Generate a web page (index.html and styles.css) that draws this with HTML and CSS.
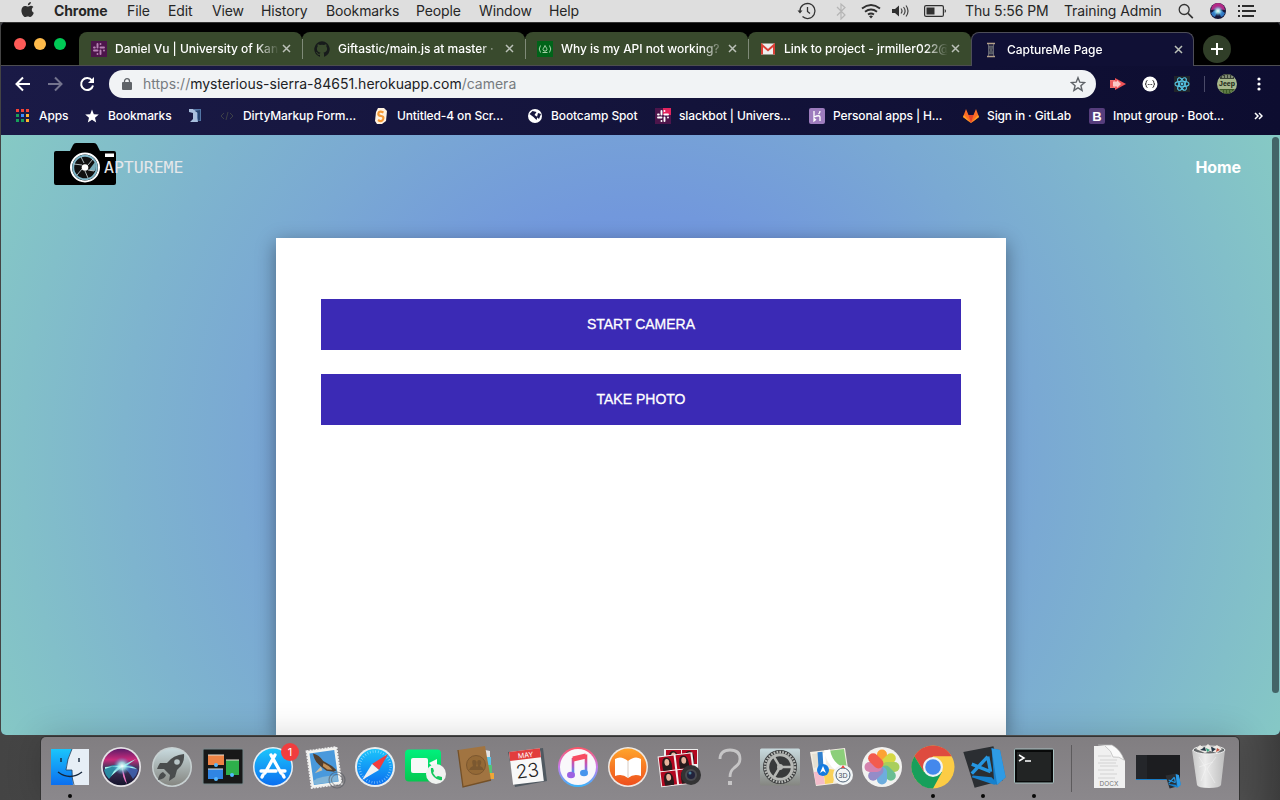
FILE: index.html
```html
<!DOCTYPE html>
<html lang="en">
<head>
<meta charset="utf-8">
<title>CaptureMe Page</title>
<link rel="stylesheet" href="styles.css">
</head>
<body>
<svg class="defs" width="0" height="0">
  <defs>
    <linearGradient id="siriTop" x1="0" y1="0" x2="0" y2="1"><stop offset="0" stop-color="#5a1c68"/><stop offset=".3" stop-color="#c92b7b"/><stop offset=".5" stop-color="#4a355e"/><stop offset="1" stop-color="#14142c"/></linearGradient>
    <radialGradient id="glow"><stop offset="0" stop-color="#fff"/><stop offset=".4" stop-color="#a5f3f3" stop-opacity=".8"/><stop offset="1" stop-color="#3a7fd0" stop-opacity="0"/></radialGradient>
    <linearGradient id="blue" x1="0" y1="0" x2="0" y2="1"><stop offset="0" stop-color="#1bc5fb"/><stop offset="1" stop-color="#0b6ff0"/></linearGradient>
    <linearGradient id="silver" x1="0" y1="0" x2="0" y2="1"><stop offset="0" stop-color="#c8dade"/><stop offset="1" stop-color="#858681"/></linearGradient>
    <linearGradient id="green" x1="0" y1="0" x2="0" y2="1"><stop offset="0" stop-color="#00f17d"/><stop offset="1" stop-color="#05c750"/></linearGradient>
    <linearGradient id="orange" x1="0" y1="0" x2="0" y2="1"><stop offset="0" stop-color="#ffa42b"/><stop offset="1" stop-color="#ee4f1d"/></linearGradient>
    <linearGradient id="tunes" x1="0" y1="0" x2="0" y2="1"><stop offset="0" stop-color="#fd5565"/><stop offset=".5" stop-color="#c97bee"/><stop offset="1" stop-color="#36b6fb"/></linearGradient>
    <linearGradient id="note" x1="0" y1="0" x2="0" y2="1"><stop offset="0" stop-color="#f8495f"/><stop offset=".55" stop-color="#b05bcc"/><stop offset="1" stop-color="#3aa2f5"/></linearGradient>
    <linearGradient id="bin" x1="0" y1="0" x2="1" y2="0"><stop offset="0" stop-color="#c6c6c6"/><stop offset=".4" stop-color="#ececec"/><stop offset="1" stop-color="#bdbdbd"/></linearGradient>
    <g id="slackMark" stroke-width="1.900" stroke-linecap="round" fill="none"><path d="M6.500 3v3.500M3 6.500h.8M9.500 3v0M9.500 6.500H13M3 9.500h3.500M6.500 13v0M9.500 9.500V13M13 9.500h0"/></g>
    <g id="codeMark"><path d="M-22-16 10-22l10 36-30 8z" fill="#2b2e32"/><path d="M8-20l9 2 6 29-9 8-3-1z" fill="#197cc4"/><path d="M8-20l9 2 6 29-9 8z" fill="#2f9be5"/><path d="M8 11-12 9l-1 2 24 8 3-2z" fill="#1681ce"/><path d="M4-11-13 7M-13-3 7 5M4-11 7 5" stroke="#2596e1" stroke-width="3.600" fill="none"/></g>
    <g id="portrait"><path d="M0 0h15v14H0z" fill="#b30820"/><path d="M3 14C2 6 3 1 7 1s6 5 5 13z" fill="#271b1c"/><ellipse cx="7.500" cy="6" rx="2.400" ry="3.400" fill="#e8b39c"/></g>
  </defs>
</svg>

<header class="menubar">
  <nav class="menus">
    <svg class="apple" width="16" height="20" viewBox="0 0 16 20"><path d="M10.900 2c.1 1.700-1.300 3.200-3 3.200C7.700 3.600 9.200 2.100 10.900 2zM13.400 7c-1 .6-1.600 1.600-1.600 2.800 0 1.300.8 2.500 2 3-.6 1.900-2 4.200-3.500 4.200-.9 0-1.300-.6-2.500-.6s-1.700.6-2.500.6C3.500 17 1.400 13.400 1.400 10.400c0-2.700 1.700-4.500 3.700-4.500 1.200 0 2 .7 2.700.7.700 0 1.600-.8 3.100-.8 1 0 1.900.4 2.500 1.200z" fill="#303030"/></svg>
    <b>Chrome</b><span>File</span><span>Edit</span><span>View</span><span>History</span><span>Bookmarks</span><span>People</span><span>Window</span><span>Help</span>
  </nav>
  <div class="status">
    <svg width="20" height="18" viewBox="0 0 20 18" fill="none" stroke="#333" stroke-width="1.300"><path d="M3 9a7.500 7.500 0 1 1 2.500 5.600M10.500 5v4.500l2.500 2"/><path d="M.5 8.500h5L3 11.500z" fill="#333" stroke="none"/></svg>
    <svg width="12" height="18" viewBox="0 0 12 18" fill="none" stroke="#b5b5b5" stroke-width="1.200"><path d="M2 5l8 8-4 4V2l4 3.500-8 8"/></svg>
    <svg width="20" height="18" viewBox="0 0 20 18" fill="none" stroke="#303030" stroke-width="1.900"><path d="M1 6.500q9-7 18 0M4 9.700q6-4.500 12 0M7 12.600q3-2.200 6 0"/><path d="M10 16.500l-2-2.200q2-1.400 4 0z" fill="#303030" stroke="none"/></svg>
    <svg width="18" height="18" viewBox="0 0 18 18" fill="none" stroke="#444" stroke-width="1.200"><path d="M1 7h3l4-3.500v11L4 11H1z" fill="#303030" stroke="none"/><path d="M10 6.500q2 2.500 0 5M12.500 5q3.200 4 0 8M15 3.500q4 5.500 0 11"/></svg>
    <svg width="23" height="18" viewBox="0 0 23 18"><rect x=".6" y="3.600" width="18.800" height="10.800" rx="1.500" fill="none" stroke="#303030" stroke-width="1.200"/><path d="M2.500 5.500h8v7h-8z" fill="#303030"/><path d="M20.700 7q2.600 2 0 4z" fill="#303030"/></svg>
    <span>Thu 5:56 PM</span><span>Training Admin</span>
    <svg width="16" height="18" viewBox="0 0 16 18" fill="none" stroke="#333" stroke-width="1.300"><circle cx="6.200" cy="7.500" r="5"/><path d="M10 11.300l4.800 4.800" stroke-width="1.700"/></svg>
    <svg width="16" height="18" viewBox="-8 -9 16 18"><circle r="8" fill="#17173a"/><path d="M-7-1A7 7 0 0 1 7-1Q3-2 0-1-3-2-7-1z" fill="#b32a86"/><path d="M-7 2Q-4-1 0-1L-3 6Q-6 5-7 2zM7 2Q4-1 0-1L3 6Q6 5 7 2z" fill="#3079c4"/><circle r="5.500" fill="url(#glow)"/></svg>
    <svg width="19" height="18" viewBox="0 0 19 18" stroke="#2c2c2c" stroke-width="2"><path d="M0 4h2M0 9h2M0 14h2M4 4h12M4 9h14M4 14h12"/></svg>
  </div>
</header>

<main class="window">
  <div class="tabstrip">
    <div class="lights"><i class="close"></i><i class="mini"></i><i class="maxi"></i></div>
    <div class="tab">
      <svg width="16" height="16"><path d="M0 0h16v16H0z" fill="#4d154b"/><use href="#slackMark" stroke="#b883b5"/></svg>
      <span>Daniel Vu | University of Kan</span><svg class="x" width="9" height="9"><path d="M1 1l7 7M8 1L1 8"/></svg>
    </div>
    <div class="tab">
      <svg width="16" height="16" viewBox="0 0 16 16"><path d="M8 .2a8 8 0 0 0-2.500 15.500c.4.100.5-.2.500-.4v-1.500c-2 .4-2.600-.5-2.800-1-.1-.3-.5-1-.9-1.200-.3-.2-.7-.5 0-.5.600 0 1.100.6 1.200.8.700 1.200 1.900.9 2.500.7 0-.5.200-.9.500-1.100-1.800-.2-3.600-.9-3.600-4 0-.9.300-1.600.8-2.100-.1-.2-.4-1 .1-2.100 0 0 .7-.2 2.200.8a7.500 7.500 0 0 1 4 0c1.500-1 2.200-.8 2.200-.8.500 1.100.2 1.900.1 2.100.5.600.8 1.300.8 2.100 0 3.100-1.900 3.800-3.700 4 .3.300.6.700.6 1.500v2.300c0 .2.100.5.500.4A8 8 0 0 0 8 .2z" fill="#171b1b"/></svg>
      <span>Giftastic/main.js at master ·</span><svg class="x" width="9" height="9"><path d="M1 1l7 7M8 1L1 8"/></svg>
    </div>
    <div class="tab">
      <svg width="16" height="16"><path d="M0 0h16v16H0z" fill="#006419"/><path d="M3.500 4.500q-2.500 3.500 0 7M12.500 4.500q2.500 3.500 0 7M5.500 11.500h5M8 4.500q-.5 1.500-1.600 2.800t.6 2.700h2q1.600-1 .6-2.700T8 4.500z" fill="none" stroke="#b9dfb9" stroke-width=".9"/></svg>
      <span>Why is my API not working?</span><svg class="x" width="9" height="9"><path d="M1 1l7 7M8 1L1 8"/></svg>
    </div>
    <div class="tab">
      <svg width="16" height="16"><path d="M1 2.500h14v11H1z" fill="#eee"/><path d="M2 13.500V4l6 5.200L14 4v9.500" fill="none" stroke="#d93f35" stroke-width="2"/></svg>
      <span>Link to project - jrmiller022@</span><svg class="x" width="9" height="9"><path d="M1 1l7 7M8 1L1 8"/></svg>
    </div>
    <div class="tab active">
      <svg width="16" height="16"><path d="M4 1.500h8M4 14.500h8" stroke="#b6a28a" stroke-width="1.600"/><path d="M5.500 2v12M10.500 2v12" stroke="#777a83" stroke-width=".8"/><path d="M6 4h4l-1 4 1 4H6l1-4z" fill="#4e535f" stroke="#777" stroke-width=".6"/></svg>
      <span>CaptureMe Page</span><svg class="x" width="9" height="9"><path d="M1 1l7 7M8 1L1 8"/></svg>
    </div>
    <div class="newtab"><svg width="12" height="12"><path d="M6 0v12M0 6h12" stroke="#fff" stroke-width="2"/></svg></div>
  </div>

  <div class="toolbar">
    <svg width="16" height="16" fill="none" stroke="#fff" stroke-width="2"><path d="M15 8H2M8 1.500L1.500 8 8 14.500"/></svg>
    <svg width="16" height="16" fill="none" stroke="#74748e" stroke-width="2"><path d="M1 8h13M8 1.500L14.500 8 8 14.500"/></svg>
    <svg width="16" height="16" fill="none" stroke="#fff" stroke-width="2"><path d="M13 4.500A6 6 0 1 0 14 9.500"/><path d="M15 1v6H9z" fill="#fff" stroke="none"/></svg>
    <div class="omnibox">
      <svg width="10" height="12"><path d="M1 4h8q1 0 1 1v6q0 1-1 1H1q-1 0-1-1V5q0-1 1-1z" fill="#5f6368"/><path d="M2.500 5V3.200a2.500 2.500 0 0 1 5 0V5" fill="none" stroke="#5f6368" stroke-width="1.300"/></svg>
      <span class="url"><span>https://</span>mysterious-sierra-84651.herokuapp.com<span>/camera</span></span>
      <svg width="16" height="16" fill="none" stroke="#5f6368" stroke-width="1.400"><path d="M8 1.700l1.800 4.500 4.800.4-3.700 3.100 1.200 4.700L8 11.800l-4.100 2.600 1.200-4.700L1.400 6.600l4.800-.4z"/></svg>
    </div>
    <svg width="16" height="16"><path d="M0 4h7v8H0z" fill="#f6827f"/><path d="M5 2l11 6-11 6z" fill="#ef5357"/><path d="M0 4.500h4v7H0z" fill="#ee5d5f"/><path d="M3 5.500h4v5H3zM7 4l4 4-4 4z" fill="#fbc8c6"/></svg>
    <svg width="16" height="16"><circle cx="8" cy="8" r="7.500" fill="#fff"/><path d="M5.500 4.500q-1.500 0-1.300 1.800T3 8q1.400.2 1.200 1.800t1.300 1.700M10.500 4.500q1.500 0 1.300 1.800T13 8q-1.400.2-1.200 1.800t-1.300 1.700M5.800 8.500h1M7.500 8.500h1M9.200 8.500h1" fill="none" stroke="#333"/></svg>
    <svg width="16" height="16" viewBox="-8 -8 16 16"><path d="M-8-8H8V8H-8z" fill="#20242a"/><g fill="none" stroke="#55c4e3" stroke-width="1.100"><ellipse rx="7" ry="2.700"/><ellipse rx="7" ry="2.700" transform="rotate(60)"/><ellipse rx="7" ry="2.700" transform="rotate(120)"/></g><circle r="1.400" fill="#55c4e3"/></svg>
    <i class="rule"></i>
    <svg class="avatar" width="20" height="20"><circle cx="10" cy="10" r="10" fill="#a6b78b"/><path d="M3 3q7-6 14 0v2H3z" fill="#3a4336"/><path d="M2 15h16q-8 10-16 0z" fill="#3c5828"/><path d="M6 2v2M9 1v3M12 1v3M15 2v2" stroke="#c9d5b5"/><path d="M5 16v2M8 16v3M11 16v3M14 16v2" stroke="#7c9a60"/><text x="10" y="11.500" text-anchor="middle">Jeep</text></svg>
    <svg width="4" height="16" fill="#fff"><circle cx="2" cy="3" r="1.600"/><circle cx="2" cy="8" r="1.600"/><circle cx="2" cy="13" r="1.600"/></svg>
  </div>

  <div class="bookmarks">
    <a><svg width="16" height="16" stroke-width="3"><path d="M1 2.500h3M6 2.500h3M11 2.500h3" stroke="#f44336"/><path d="M1 7.500h3M1 12.500h3M6 12.500h3" stroke="#17a05a"/><path d="M6 7.500h3" stroke="#388cff"/><path d="M11 7.500h3M11 12.500h3" stroke="#ffb52b"/></svg>Apps</a>
    <a><svg width="16" height="16"><path d="M8 1.500l1.800 4.700 5 .3-3.800 3.200 1.200 4.800L8 11.800l-4.200 2.700L5 9.700 1.200 6.500l5-.3z" fill="#fff"/></svg>Bookmarks</a>
    <a><svg width="16" height="16"><path d="M7 1h7v12H8z" fill="#5375a5"/><path d="M2 1h4l4 3v6l1 4H3l3-3V5L2 4z" fill="#a9bfdd"/><path d="M8 3l3 2v8l2-1V2z" fill="#27436f"/></svg></a>
    <a><svg width="16" height="16" fill="none" stroke="#3d4047"><path d="M5 5L2 8l3 3M11 5l3 3-3 3M9 4L7 12"/></svg>DirtyMarkup Form...</a>
    <a><svg width="16" height="16"><path d="M5 0h6l3 3-1 10-4 3H4l-2-3 1-9z" fill="#fff2df"/><path d="M10.500 4.500q-4-2-5 .5t2.500 3 2 3.500-5 .5" fill="none" stroke="#f69a35" stroke-width="2.200"/></svg>Untitled-4 on Scr...</a>
    <a><svg width="16" height="16"><circle cx="8" cy="8" r="7" fill="#fff"/><path d="M2.500 6l3-3 4 1-2 3 3 2-1 3-3-3zM11 5l3 1-2 5-2-2z" fill="#17173e"/></svg>Bootcamp Spot</a>
    <a><svg width="16" height="16"><path d="M0 0h16v16H0z" fill="#4d154b"/><path d="M8 0h8v7H8z" fill="#e4245e"/><use href="#slackMark" stroke="#fff"/></svg>slackbot | Univers...</a>
    <a><svg width="16" height="16"><rect width="16" height="16" rx="2" fill="#9d7cbd"/><path d="M5 3v6q6-2.500 6 0v4M11 3q0 2-1.500 3M5 10.500v2.500l1.500-1.200z" fill="none" stroke="#fff" stroke-width="1.300"/></svg>Personal apps | H...</a>
    <a><svg width="16" height="16"><path d="M3 1l2.500 6h5L13 1l3 8-8 6-8-6z" fill="#fc6d26"/><path d="M5.500 7h5L8 15z" fill="#e24329"/><path d="M0 9l1-2 7 8zM16 9l-1-2-7 8z" fill="#fca326"/></svg>Sign in · GitLab</a>
    <a><svg class="boot" width="16" height="16"><rect width="16" height="16" rx="2" fill="#563d7c"/><text x="8" y="12.500" text-anchor="middle">B</text></svg>Input group · Boot...</a>
    <svg class="more" width="9" height="8" fill="none" stroke="#fff" stroke-width="1.500"><path d="M1 1l3 3-3 3M5 1l3 3-3 3"/></svg>
  </div>

  <section class="page">
    <nav class="site-nav">
      <div class="brand">
        <svg width="64" height="44"><path d="M3 9h14l3-6q1-2 3-2h18q2 0 3 2l3 6h14q2 0 2 2v30q0 2-2 2H3q-2 0-2-2V11q0-2 2-2z"/><path d="M52 11.500h9v3.500h-9z" fill="#fff"/><circle cx="32" cy="25.500" r="14" fill="#111" stroke="#fff" stroke-width="2"/><circle cx="32" cy="25.500" r="11.800" fill="none" stroke="#80b7c9" stroke-width="2"/><path d="M42 20q2 4 0 9l-6-1z" fill="#77acba"/><g stroke="#d6e2e5" stroke-width=".8" fill="none"><path d="M29 23l-8-1M31 21l-3-6M35 23l5-6M35 28l6 1M32 29l3 7M29 27l-5 6"/></g><circle cx="32" cy="25.500" r="3.300" fill="#fff"/></svg>
        <span>APTUREME</span>
      </div>
      <a>Home</a>
    </nav>
    <div class="card">
      <button>START CAMERA</button>
      <button>TAKE PHOTO</button>
    </div>
    <i class="scrollbar"></i>
  </section>
</main>

<footer class="dock">
  <div class="app running"><svg viewBox="-25 -25 50 50"><path d="M-19-18h38v36h-38z" fill="#e6eef6"/><path d="M-19-18H2Q-3-8-4 3H2l1 15h-22z" fill="url(#blue)"/><path d="M2-18Q-3-8-4 3H2q-.5 8 2 15" fill="none" stroke="#21405d" stroke-width=".8"/><path d="M-9-9v4M9-9v4M-12 5Q0 14 12 5" fill="none" stroke="#14253a" stroke-width="1.400"/></svg></div>
  <div class="app"><svg viewBox="-25 -25 50 50"><circle r="20" fill="#e5e3e6"/><circle r="18.300" fill="url(#siriTop)"/><path d="M-17 3Q-10-4 1-1-6 4-12 12-16 8-17 3z" fill="#27a3b8" opacity=".8"/><path d="M17 3Q9-5 1-1 7 3 12 12 16 8 17 3z" fill="#3f66b8" opacity=".8"/><path d="M1-1q2 7 5 18-5-6-5-18" fill="#ef78c4"/><path d="M-16 2Q-5-2 1-1q7-4 14-7-7 5-10 7 7 0 11 3-9-2-15-2-5 4-11 9 3-6 7-9-6-1-13 0z" fill="#a5f5ee"/><circle cx="1" cy="-1" r="9" fill="url(#glow)"/></svg></div>
  <div class="app"><svg viewBox="-25 -25 50 50"><circle r="20" fill="#c8d1d2"/><circle r="18.500" fill="url(#silver)"/><path d="M12-13Q1-12-5-4l-7 0q-2 3-3 6l7 0 6 6-1 6 6-4 2-7Q13-3 12-13zM-9 5q-4 1-5 8 7-1 8-5z" fill="#4a4d4e"/><circle cx="5" cy="-5" r="2.800" fill="#b8c5c7"/></svg></div>
  <div class="app"><svg viewBox="-25 -25 50 50"><rect x="-20" y="-18" width="40" height="35" rx="1" fill="#171818" stroke="#77888b"/><path d="M-15-12H1V-2h-16z" fill="#ed8345"/><path d="M3-7h13V8H3z" fill="#2daf4b"/><path d="M-15 2H0v10h-15z" fill="#3085e3"/><path d="M-15-12H1M3-7h13M-15 2H0" stroke="#e4ded4"/><g fill="#54b7ff"><circle cx="-7" cy="-2" r="2"/><circle cx="9" cy="8" r="2"/><circle cx="-7" cy="12" r="2"/></g></svg></div>
  <div class="app badged"><svg viewBox="-25 -25 50 50"><circle r="20" fill="#e8eef3"/><circle r="18.500" fill="url(#blue)"/><path d="M2-12L-8 6M-2-12L8 6M-12 4H3M7 4h5M-10 8l-1 2M10 8l1 2" stroke="#fff" stroke-width="3.300" stroke-linecap="round"/></svg><b>1</b></div>
  <div class="app"><svg viewBox="-25 -25 50 50"><g transform="rotate(-8)"><path d="M-15-18h30v37h-30z" fill="#f5f5f0" stroke="#eee" stroke-width="2" stroke-dasharray="2 1"/><path d="M-12.500-15.500h25v32h-25z" fill="#4999dc"/><path d="M-9-15q6 2 9 9l8 6 4 5-3 1-7-2-5-5q-6-6-6-14z" fill="#54402f"/><path d="M0-4l5 4 3 4-5-1-4-4z" fill="#c69257"/><path d="M-3-1l-7 6 8-2z" fill="#cfc0a5"/><path d="M-12 12q8-4 24-2v6h-24z" fill="#7fb4d8"/></g><circle cx="13" cy="13" r="8" fill="none" stroke="#555a61" stroke-width="1.200" opacity=".6"/><circle cx="13" cy="13" r="5.500" fill="none" stroke="#555a61" opacity=".6"/></svg></div>
  <div class="app"><svg viewBox="-25 -25 50 50"><circle r="20" fill="#e9edef"/><circle r="18" fill="url(#blue)"/><circle r="15.500" fill="none" stroke="#bae9ff" stroke-width="2.500" stroke-dasharray=".7 2" opacity=".7"/><path d="M13-13L4 3-3-3z" fill="#f33c3d"/><path d="M-13 13L4 3-3-3z" fill="#f1f1f1"/></svg></div>
  <div class="app"><svg viewBox="-25 -25 50 50"><rect x="-20" y="-17.500" width="36" height="32" rx="4" fill="url(#green)"/><rect x="-14" y="-9" width="17" height="15" rx="2" fill="#f7f9f7"/><path d="M4-4l8-4v12z" fill="#f7f9f7"/><circle cx="11" cy="7" r="10" fill="#f0f2f0"/><path d="M6 1q-1 5 3 9t8 3l0-3-4-1-2 1-3-4 1-2-1-3z" fill="#13c85d"/></svg></div>
  <div class="app"><svg viewBox="-25 -25 50 50"><path d="M9-17l5 1v9l-4 1z" fill="#e4e4e4"/><path d="M10-10h5v8h-4z" fill="#5bc3e7"/><path d="M11-2h5v8h-4z" fill="#55c477"/><path d="M13 6h5v6h-5z" fill="#efa637"/><path d="M-18-17L9-21l6 34-28 7z" fill="#a17441"/><path d="M-18-17l5 37 28-7" fill="none" stroke="#745027" stroke-width="1.300"/><circle r="9.500" cy="-2" fill="#946936" stroke="#7c572f"/><path d="M-7 3q1-3 4-4-2-7 1-6 4 0 2 6 1 1 2 0-2-6 1-6 4 0 1 6 3 1 4 4z" fill="#7b5830"/></svg></div>
  <div class="app"><svg viewBox="-25 -25 50 50"><path d="M-19-15l35-4 4 33-32 6z" fill="#505961"/><g transform="rotate(-7)"><path d="M-16-17h31v33h-31z" fill="#f8f8f8"/><path d="M-16-17h31v9h-31z" fill="#e23d3d"/><text class="month" x="0" y="-9.500" text-anchor="middle">MAY</text><text class="day" x="0" y="10.500" text-anchor="middle">23</text></g></svg></div>
  <div class="app"><svg viewBox="-25 -25 50 50"><circle r="20" fill="url(#tunes)"/><circle r="18" fill="#f9f8fb"/><path d="M-5 7V-8L8-11V5" stroke="url(#note)" stroke-width="2.600" fill="none"/><path d="M-5-8L8-11" stroke="#f74c63" stroke-width="5"/><ellipse cx="-7" cy="8" rx="4" ry="3.300" fill="#9c61e2"/><ellipse cx="6" cy="6" rx="4" ry="3.300" fill="#4795ed"/></svg></div>
  <div class="app"><svg viewBox="-25 -25 50 50"><circle r="20" fill="#eee9e5"/><circle r="18.500" fill="url(#orange)"/><path d="M0-6Q-7-12-13-8V9q7-3 13 2 6-5 13-2V-8Q7-12 0-6z" fill="#fff"/><path d="M0-6V11" stroke="#d7cbc2"/></svg></div>
  <div class="app"><svg viewBox="-25 -25 50 50"><path d="M-15-18h34V7h-34z" fill="#eee"/><use href="#portrait" x="-13" y="-17"/><use href="#portrait" x="3" y="-17"/><g transform="rotate(-7)"><path d="M-20-13h35v31h-35z" fill="#f3eeee"/><use href="#portrait" x="-19" y="-12"/><use href="#portrait" x="-2" y="-12"/><use href="#portrait" x="-19" y="3"/><use href="#portrait" x="-2" y="3"/></g><circle cx="12" cy="8" r="10" fill="#333334"/><circle cx="12" cy="8" r="6" fill="#4a4b50"/><circle cx="12" cy="8" r="4" fill="#22233b"/><circle cx="11" cy="6" r="1.500" fill="#4a829b"/></svg></div>
  <div class="app"><svg viewBox="-25 -25 50 50"><path d="M-10-8q0-9 10-9t10 9Q10-3 4 1 0 4 0 10" fill="none" stroke="#c6c5c6" stroke-width="2.800"/><path d="M-2 14h4v4h-4z" fill="#c6c5c6"/></svg></div>
  <div class="app"><svg viewBox="-25 -25 50 50"><rect x="-20" y="-18.500" width="40" height="37" rx="1.500" fill="url(#silver)"/><circle r="17" fill="#383a3b"/><circle r="15" fill="none" stroke="#b6b8b5" stroke-width="2.500" stroke-dasharray="1.700 1.200"/><circle r="12.300" fill="none" stroke="#b6b8b5" stroke-width="3"/><path d="M0 0L12 0M0 0L-6-10M0 0L-6 10" stroke="#b6b8b5" stroke-width="2.500"/><circle r="3" fill="#b6b8b5"/></svg></div>
  <div class="app"><svg viewBox="-25 -25 50 50"><path d="M-21-15l35-4 5 34-34 4z" fill="#f3eee4"/><path d="M-4-16l17-2 4 27-12-8z" fill="#8ccf7a"/><path d="M-19-13l7-1 2 13-7 2z" fill="#e5e0d2"/><path d="M-9-14l3 30M-4-17Q-1 1 17 5" fill="none" stroke="#fff" stroke-width="6"/><path d="M-17 5l9-1 2 13-9 1z" fill="#f4bccb"/><path d="M-8 1L5 3 2 16-6 17z" fill="#fad15a"/><path d="M-11-15l1 16" stroke="#3080cf" stroke-width="5"/><circle cx="-8" cy="3" r="6" fill="#147be0"/><path d="M-8-1l3 7-3-2-3 2z" fill="#fff"/><circle cx="12" cy="8" r="10" fill="#f2f5f6"/><circle cx="12" cy="8" r="7" fill="none" stroke="#4f6376"/><text class="compass" x="12" y="10.500" text-anchor="middle">3D</text><path d="M12-2l2 3h-4z" fill="#e84942"/></svg></div>
  <div class="app"><svg viewBox="-25 -25 50 50"><circle r="20" fill="#f2f2f0"/><g opacity=".9"><rect x="-5" y="-17.500" width="10" height="17.500" rx="5" fill="#ff9b20"/><rect x="-5" y="-17.500" width="10" height="17.500" rx="5" fill="#d2d632" transform="rotate(45)"/><rect x="-5" y="-17.500" width="10" height="17.500" rx="5" fill="#a2cb4d" transform="rotate(90)"/><rect x="-5" y="-17.500" width="10" height="17.500" rx="5" fill="#5bb98a" transform="rotate(135)"/><rect x="-5" y="-17.500" width="10" height="17.500" rx="5" fill="#5fa6dd" transform="rotate(180)"/><rect x="-5" y="-17.500" width="10" height="17.500" rx="5" fill="#8a82c4" transform="rotate(225)"/><rect x="-5" y="-17.500" width="10" height="17.500" rx="5" fill="#d176a7" transform="rotate(270)"/><rect x="-5" y="-17.500" width="10" height="17.500" rx="5" fill="#f44b3d" transform="rotate(315)"/></g></svg></div>
  <div class="app running"><svg viewBox="-25 -25 50 50"><circle r="21.500" fill="#fccc45"/><path d="M-18.600-10.800A21.500 21.500 0 0 1 18.600-10.800H0L-9 5z" fill="#de4b3f"/><path d="M-18.600-10.800A21.500 21.500 0 0 0 0 21.500L9 5H-9z" fill="#179f5b"/><circle r="10" fill="#f0f3f4"/><circle r="7.800" fill="#4488ec"/></svg></div>
  <div class="app running"><svg viewBox="-25 -25 50 50"><g transform="translate(1 0) scale(.94)"><use href="#codeMark"/></g></svg></div>
  <div class="app running"><svg viewBox="-25 -25 50 50"><rect x="-19.500" y="-18" width="39" height="34" rx="1" fill="#080909" stroke="#a8c1c1"/><path d="M-17-15h34v29h-34z" fill="#222424"/><path d="M-15-12l5 3-5 3M-9-6h6" fill="none" stroke="#fff" stroke-width="1.500"/></svg></div>
  <i class="divider"></i>
  <div class="app"><svg viewBox="-25 -25 50 50"><path d="M-14-21H3q9 4 14 15v27h-31z" fill="#f0f0f0"/><path d="M-10-22H4q9 5 12 15-5-4-11-3Q4-16-3-21" fill="#fafafa" stroke="#b8b8b8" stroke-width=".7"/><path d="M-10-11h13M-8-7h17M-10-4h18M-8-1h18M-10 3h16M-8 7h17M-10 11h17" stroke="#c6c6c6" stroke-width=".7"/><text class="docx" x="1" y="18.500" text-anchor="middle">DOCX</text></svg></div>
  <div class="app"><svg viewBox="-25 -25 50 50"><path d="M-22-12h44v24h-44z" fill="#1c1d20"/><path d="M-22-12h11v24h-11z" fill="#24262a"/><path d="M-22 12.500h44" stroke="#187bc4"/><g transform="translate(15 14) scale(.34)"><use href="#codeMark"/></g></svg></div>
  <div class="app"><svg viewBox="-25 -25 50 50"><path d="M-17-17h33l-4 35q-1 3-12 3t-12-3z" fill="url(#bin)"/><ellipse cy="-17" rx="16" ry="4" fill="#686b6d" stroke="#eee"/><path d="M-13-18l4-4 4 3 4-4 4 4 5-3 5 4-5 4-7-2-5 2z" fill="#ece9e5"/><path d="M-9-17l5-3 1 4zM2-20l5 2-4 3z" fill="#253747"/><path d="M-3-19l4 2-3 2z" fill="#39a37e"/><path d="M8-19l3 2-4 2z" fill="#be503e"/><path d="M-10-10l7 11-5 13M7-10L-2 2l8 14M-10 0l14-5" stroke="#fff" fill="none" opacity=".35"/></svg></div>
</footer>
</body>
</html>
```

FILE: styles.css
```css
* { box-sizing: border-box; }
body {
  margin: 0;
  width: 1280px;
  height: 800px;
  overflow: hidden;
  display: flex;
  flex-direction: column;
  background: linear-gradient(90deg, #444, #555 50%, #505050 97%, #3c3c3c);
  font-family: Inter, "Liberation Sans", sans-serif;
}
svg { display: block; flex: none; }
.defs { position: absolute; }

/* system menu bar */
.menubar {
  height: 22px;
  flex: none;
  display: flex;
  justify-content: space-between;
  background: #dedede;
  color: #262626;
  font-size: 14px;
  line-height: 22px;
  letter-spacing: -.12px;
  white-space: nowrap;
}
.menus {
  display: grid;
  grid-template-columns: 34px 73px 41px 44px 49px 65px 90px 63px 70px 50px;
  padding-left: 20px;
}
.menus b { letter-spacing: -.1px; }
.status {
  display: grid;
  grid-template-columns: 38px 26px 30px 33px 41px 99px 114px 32px 28px 42px;
  align-items: center;
}

/* browser window */
.window {
  height: 713px;
  flex: none;
  display: flex;
  flex-direction: column;
  margin-left: 1px;
  overflow: hidden;
  border-radius: 5px;
  background: linear-gradient(90deg, #1a1a46, #0d0d30);
}
.tabstrip {
  height: 44px;
  flex: none;
  display: flex;
  align-items: flex-end;
  border-top: 1px solid #333;
  border-bottom: 1px solid #4d4d50;
  background: #000;
}
.lights {
  width: 78px;
  height: 42px;
  padding-left: 13px;
  display: flex;
  gap: 8px;
  align-items: center;
}
.lights i { width: 12px; height: 12px; border-radius: 50%; }
.close { background: #ff5b58; }
.mini { background: #ffbb4b; }
.maxi { background: #00ca56; }
.tab {
  width: 223px;
  height: 33px;
  padding-left: 12px;
  display: flex;
  align-items: center;
  position: relative;
  border-radius: 8px 8px 0 0;
  background: #394a2d;
  color: #fff;
  font-size: 12px;
  font-weight: 500;
  letter-spacing: -.03px;
}
.tab + .tab:not(.active)::before {
  content: "";
  position: absolute;
  left: 0;
  top: 7px;
  width: 1px;
  height: 20px;
  background: #7f8a78;
}
.tab span {
  width: 164px;
  margin: 0 3px 0 8px;
  white-space: nowrap;
  -webkit-mask-image: linear-gradient(90deg, #000 86%, transparent);
}
.tab .x { fill: none; stroke: #bbc1b8; stroke-width: 1.500; }
.tab.active {
  height: 34px;
  margin-bottom: -1px;
  padding-left: 11px;
  background: #101035;
  border: 1px solid #4d4d58;
  border-bottom: 0;
}
.newtab {
  width: 28px;
  height: 28px;
  margin: 0 0 2px 9px;
  border-radius: 50%;
  display: grid;
  place-items: center;
  background: #303e28;
}

.toolbar {
  height: 35px;
  flex: none;
  display: flex;
  align-items: center;
  gap: 16px;
  padding: 0 15px 0 14px;
}
.omnibox {
  width: 987px;
  height: 28px;
  margin: 0 -2px 0 -2px;
  padding: 0 10px 0 13px;
  display: flex;
  align-items: center;
  gap: 11px;
  border-radius: 14px;
  background: #f1f3f5;
  color: #202124;
  font-size: 14px;
  letter-spacing: 0;
}
.url { flex: 1; }
.url span { color: #777b80; }
.rule { width: 1px; height: 16px; margin: 0 -5px 0 -2px; background: #4a4a68; }
.avatar { margin: 0 4px 0 1px; }
.avatar text { font: bold 7px "Liberation Sans", sans-serif; fill: #151d13; }

.bookmarks {
  height: 34px;
  flex: none;
  display: grid;
  grid-template-columns: 69px 103px 32px 154px 154px 128px 154px 154px 126px 165px 12px;
  align-items: center;
  padding: 0 0 3px 14px;
  margin-top: -1px;
  margin-bottom: 1px;
  color: #fff;
  font-size: 12px;
  font-weight: 500;
  letter-spacing: -.12px;
  white-space: nowrap;
}
.bookmarks a { display: flex; align-items: center; gap: 8px; }
.boot text { font: bold 13px "Liberation Sans", sans-serif; fill: #fff; }

/* web page */
.page {
  flex: 1;
  position: relative;
  background: radial-gradient(circle 718px at 639px 322px, #6b8ce5, #7298dc 34%, #7aa9d3 56%, #7eb4ce 72%, #86cac4);
}
.site-nav {
  height: 103px;
  display: flex;
  justify-content: space-between;
  padding: 7px 39px 0 52px;
  color: #fff;
}
.brand { display: flex; height: 44px; }
.brand span {
  margin-left: -13px;
  padding-top: 15px;
  position: relative;
  color: #e5e7ea;
  font: 16.500px/22px "DejaVu Sans Mono", monospace;
}
.site-nav a { padding-top: 15px; font-size: 16px; line-height: 20px; font-weight: 700; letter-spacing: -.1px; }
.card {
  width: 730px;
  height: 497px;
  margin-left: 275px;
  padding: 61px 45px 0;
  display: flex;
  flex-direction: column;
  gap: 24px;
  background: #fff;
  box-shadow: 0 5px 18px rgba(0, 0, 0, .4);
}
.card button {
  height: 51px;
  flex: none;
  padding: 0 0 2px;
  border: 0;
  background: #3b2ab5;
  color: #fff;
  font: 14px "Liberation Sans", sans-serif;
  -webkit-text-stroke: .3px #fff;
}
.scrollbar {
  position: absolute;
  right: 1px;
  top: 2px;
  width: 7px;
  height: 556px;
  border-radius: 4px;
  background: #436467;
}

/* dock */
.dock {
  width: 1198px;
  height: 63px;
  flex: none;
  margin: 2px 0 0 41px;
  padding: 5px 0 0 4px;
  display: flex;
  position: relative;
  border-radius: 5px 5px 0 0;
  background: linear-gradient(#817e81, #8b888c);
  box-shadow: 0 0 0 1px #333, 0 0 35px rgba(0, 0, 0, .18);
}
.app { width: 50.720px; flex: none; display: flex; flex-direction: column; align-items: center; gap: 2px; position: relative; }
.app svg { width: 50px; height: 50px; }
.running::after { content: ""; width: 4px; height: 4px; border-radius: 50%; background: #080808; }
.badged b {
  position: absolute;
  left: 33px;
  top: 1px;
  width: 18px;
  height: 18px;
  border-radius: 50%;
  background: #f13d3e;
  color: #fff;
  font: 11px/18px Inter, sans-serif;
  text-align: center;
}
.divider { width: 1px; height: 47px; margin: 3px 10px 0 12px; background: #5d5b5d; }
.month { font: 7px Inter, sans-serif; fill: #fff; }
.day { font: 300 19px Inter, sans-serif; fill: #222; }
.compass { font: 7px "Liberation Sans", sans-serif; fill: #46515c; }
.docx { font: 6.500px Inter, sans-serif; fill: #777; }
```
